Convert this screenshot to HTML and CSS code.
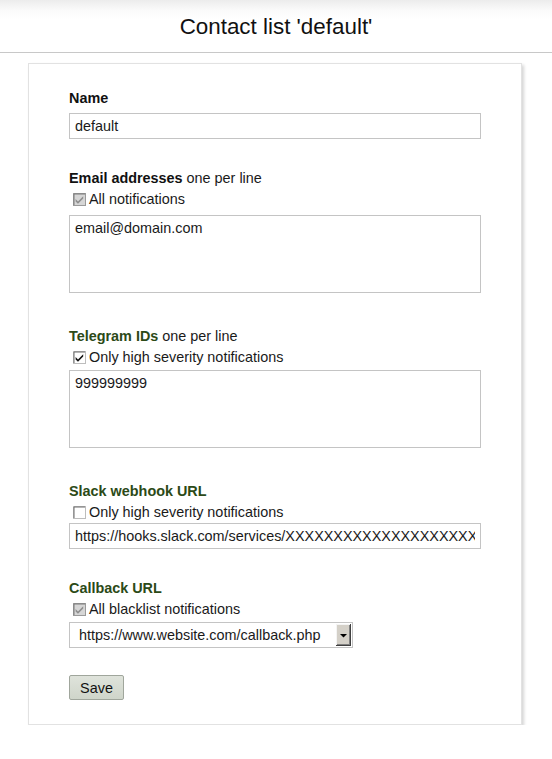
FILE: index.html
```html
<!DOCTYPE html>
<html lang="en">
<head>
<meta charset="utf-8">
<title>Contact list 'default'</title>
<link rel="stylesheet" href="styles.css">
</head>
<body>
<header class="topbar">
  <h1 class="title">Contact list 'default'</h1>
</header>
<main class="card">
  <form class="form">
    <div class="field field-first">
      <label class="lbl">Name</label>
      <input class="txt" type="text" value="default">
    </div>

    <div class="field">
      <div class="lbl-row"><span class="lbl">Email addresses</span> one per line</div>
      <div class="chk-row">
        <span class="chk chk-disabled"><svg width="13" height="13" viewBox="0 0 13 13"><rect x="0.5" y="0.5" width="12" height="12" fill="#d6d6d6" stroke="#9a9a9a"/><path d="M1 1H12M1 1V12" stroke="#7d7d7d"/><path d="M2.6 6 L5 8.4 L10.2 3.2 L10.2 5.6 L5 10.8 L2.6 8.4Z" fill="#8e8e8e"/></svg></span>
        <span>All notifications</span>
      </div>
      <textarea class="area area-email">email@domain.com</textarea>
    </div>

    <div class="field field-green">
      <div class="lbl-row"><span class="lbl lbl-green">Telegram IDs</span> one per line</div>
      <div class="chk-row">
        <span class="chk"><svg width="13" height="13" viewBox="0 0 13 13"><rect x="0.5" y="0.5" width="12" height="12" fill="#fff" stroke="#bdbdbd"/><path d="M1 1H12M1 1V12" stroke="#6c6c6c"/><path d="M2.6 6 L5 8.4 L10.2 3.2 L10.2 5.6 L5 10.8 L2.6 8.4Z" fill="#111"/></svg></span>
        <span>Only high severity notifications</span>
      </div>
      <textarea class="area">999999999</textarea>
    </div>

    <div class="field field-green">
      <div class="lbl-row"><span class="lbl lbl-green">Slack webhook URL</span></div>
      <div class="chk-row">
        <span class="chk"><svg width="13" height="13" viewBox="0 0 13 13"><rect x="0.5" y="0.5" width="12" height="12" fill="#fff" stroke="#bdbdbd"/><path d="M1 1H12M1 1V12" stroke="#6c6c6c"/></svg></span>
        <span>Only high severity notifications</span>
      </div>
      <input class="txt txt-tight" type="text" value="https://hooks.slack.com/services/XXXXXXXXXXXXXXXXXXXXXXXXXXXXXXXX">
    </div>

    <div class="field field-callback">
      <div class="lbl-row"><span class="lbl lbl-green">Callback URL</span></div>
      <div class="chk-row">
        <span class="chk chk-disabled"><svg width="13" height="13" viewBox="0 0 13 13"><rect x="0.5" y="0.5" width="12" height="12" fill="#d6d6d6" stroke="#9a9a9a"/><path d="M1 1H12M1 1V12" stroke="#7d7d7d"/><path d="M2.6 6 L5 8.4 L10.2 3.2 L10.2 5.6 L5 10.8 L2.6 8.4Z" fill="#8e8e8e"/></svg></span>
        <span>All blacklist notifications</span>
      </div>
      <div class="select-wrap">
        <select class="sel"><option>https://www.website.com/callback.php</option></select>
        <span class="sel-btn"><svg width="15" height="22" viewBox="0 0 15 22"><rect x="0" y="0" width="15" height="22" fill="#d4d0c8"/><path d="M0 0.5H14.5M0.5 0V22" stroke="#f4f4f4"/><path d="M0 21.5H15M14.5 0V22" stroke="#404040"/><path d="M1 20.5H13.5M13.5 1V21" stroke="#808080"/><path d="M4 10H11L7.5 13.5Z" fill="#000"/></svg></span>
      </div>
    </div>

    <div class="actions">
      <button class="btn" type="button">Save</button>
    </div>
  </form>
</main>
</body>
</html>
```

FILE: styles.css
```css
html, body {
  margin: 0;
  padding: 0;
  background: #fff;
}
body {
  font-family: "Liberation Sans", Arial, sans-serif;
  font-size: 14.4px;
  color: #1a1a1a;
}
.topbar {
  height: 52px;
  border-bottom: 1px solid #c8c8c8;
  background: linear-gradient(to bottom, #ececec 0px, #fafafa 10px, #fff 20px);
  display: flex;
  align-items: center;
  justify-content: center;
}
.title {
  margin: 2px 0 0 0;
  font-size: 22.4px;
  font-weight: normal;
  color: #111;
}
.card {
  width: 412px;
  margin: 10px 0 0 28px;
  padding: 24px 40px 24px 40px;
  border: 1px solid #e2e2e2;
  box-shadow: 2px 2px 3px #d6d6d6;
  background: #fff;
}
.form {
  display: flex;
  flex-direction: column;
}
.field {
  display: flex;
  flex-direction: column;
  margin-top: 29px;
}
.field-first {
  margin-top: 0;
}
.field-green {
  margin-top: 33px;
}
.field-callback {
  margin-top: 29px;
}
.lbl, .lbl-row {
  line-height: 20px;
}
.lbl {
  font-weight: bold;
  color: #111;
}
.lbl-green {
  color: #2c4a17;
}
.chk-row {
  display: flex;
  align-items: center;
  line-height: 20px;
  margin-top: 1px;
}
.chk {
  display: flex;
  margin: 0 3px 0 4px;
}
.txt {
  box-sizing: border-box;
  width: 412px;
  height: 26px;
  margin: 5px 0 0 0;
  padding: 0 5px;
  border: 1px solid #c4c4c4;
  font-family: inherit;
  font-size: 14.4px;
  color: #1a1a1a;
  background: #fff;
  outline: none;
}
.txt-tight {
  margin-top: 1px;
}
.area {
  box-sizing: border-box;
  width: 412px;
  height: 78px;
  margin: 3px 0 0 0;
  padding: 3px 5px;
  border: 1px solid #c4c4c4;
  font-family: inherit;
  font-size: 14.4px;
  line-height: 18px;
  color: #1a1a1a;
  resize: none;
  outline: none;
}
.area-email {
  margin-top: 6px;
}
.select-wrap {
  position: relative;
  width: 284px;
  margin-top: 3px;
}
.sel {
  appearance: none;
  -webkit-appearance: none;
  box-sizing: border-box;
  width: 284px;
  height: 26px;
  padding: 0 0 0 9px;
  border: 1px solid #c4c4c4;
  border-radius: 0;
  background: #fff;
  font-family: inherit;
  font-size: 14.4px;
  color: #1a1a1a;
}
.sel-btn {
  position: absolute;
  right: 2px;
  top: 2px;
  display: flex;
}
.actions {
  margin-top: 27px;
  display: flex;
}
.btn {
  width: 55px;
  height: 25px;
  padding: 0;
  border: 1px solid #a0a69c;
  border-radius: 2px;
  background: linear-gradient(to bottom, #dfe3db, #cfd5ca);
  font-family: inherit;
  font-size: 14.4px;
  color: #111;
}
```
